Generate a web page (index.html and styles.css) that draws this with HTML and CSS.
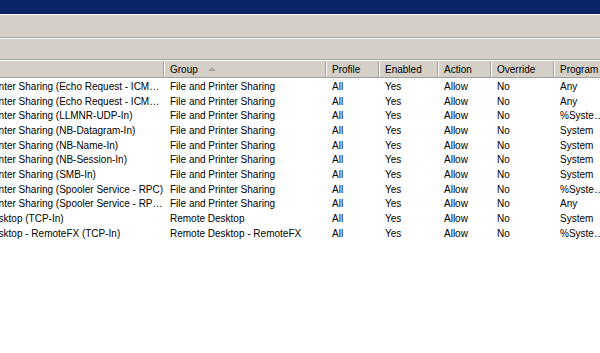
FILE: index.html
```html
<!DOCTYPE html>
<html>
<head>
  <meta charset="UTF-8">
  <title>Inbound Rules</title>
  <link rel="stylesheet" href="styles.css">
</head>
<body>
  <div class="titlebar"></div>
  <div class="bar bar-menu"></div>
  <div class="bar bar-tools"></div>

  <div class="list">
    <div class="row head">
      <div class="cell c-name"></div>
      <div class="cell c-group">Group <span class="sort"></span></div>
      <div class="cell c-profile">Profile</div>
      <div class="cell c-enabled">Enabled</div>
      <div class="cell c-action">Action</div>
      <div class="cell c-override">Override</div>
      <div class="cell c-program">Program</div>
    </div>

    <div class="row">
      <div class="cell c-name">File and Printer Sharing (Echo Request - ICMPv4-In)</div>
      <div class="cell c-group">File and Printer Sharing</div>
      <div class="cell c-profile">All</div>
      <div class="cell c-enabled">Yes</div>
      <div class="cell c-action">Allow</div>
      <div class="cell c-override">No</div>
      <div class="cell c-program">Any</div>
    </div>
    <div class="row">
      <div class="cell c-name">File and Printer Sharing (Echo Request - ICMPv6-In)</div>
      <div class="cell c-group">File and Printer Sharing</div>
      <div class="cell c-profile">All</div>
      <div class="cell c-enabled">Yes</div>
      <div class="cell c-action">Allow</div>
      <div class="cell c-override">No</div>
      <div class="cell c-program">Any</div>
    </div>
    <div class="row">
      <div class="cell c-name">File and Printer Sharing (LLMNR-UDP-In)</div>
      <div class="cell c-group">File and Printer Sharing</div>
      <div class="cell c-profile">All</div>
      <div class="cell c-enabled">Yes</div>
      <div class="cell c-action">Allow</div>
      <div class="cell c-override">No</div>
      <div class="cell c-program">%SystemRoot%\system32\svchost.exe</div>
    </div>
    <div class="row">
      <div class="cell c-name">File and Printer Sharing (NB-Datagram-In)</div>
      <div class="cell c-group">File and Printer Sharing</div>
      <div class="cell c-profile">All</div>
      <div class="cell c-enabled">Yes</div>
      <div class="cell c-action">Allow</div>
      <div class="cell c-override">No</div>
      <div class="cell c-program">System</div>
    </div>
    <div class="row">
      <div class="cell c-name">File and Printer Sharing (NB-Name-In)</div>
      <div class="cell c-group">File and Printer Sharing</div>
      <div class="cell c-profile">All</div>
      <div class="cell c-enabled">Yes</div>
      <div class="cell c-action">Allow</div>
      <div class="cell c-override">No</div>
      <div class="cell c-program">System</div>
    </div>
    <div class="row">
      <div class="cell c-name">File and Printer Sharing (NB-Session-In)</div>
      <div class="cell c-group">File and Printer Sharing</div>
      <div class="cell c-profile">All</div>
      <div class="cell c-enabled">Yes</div>
      <div class="cell c-action">Allow</div>
      <div class="cell c-override">No</div>
      <div class="cell c-program">System</div>
    </div>
    <div class="row">
      <div class="cell c-name">File and Printer Sharing (SMB-In)</div>
      <div class="cell c-group">File and Printer Sharing</div>
      <div class="cell c-profile">All</div>
      <div class="cell c-enabled">Yes</div>
      <div class="cell c-action">Allow</div>
      <div class="cell c-override">No</div>
      <div class="cell c-program">System</div>
    </div>
    <div class="row">
      <div class="cell c-name">File and Printer Sharing (Spooler Service - RPC)</div>
      <div class="cell c-group">File and Printer Sharing</div>
      <div class="cell c-profile">All</div>
      <div class="cell c-enabled">Yes</div>
      <div class="cell c-action">Allow</div>
      <div class="cell c-override">No</div>
      <div class="cell c-program">%SystemRoot%\system32\spoolsv.exe</div>
    </div>
    <div class="row">
      <div class="cell c-name">File and Printer Sharing (Spooler Service - RPC-EPMAP)</div>
      <div class="cell c-group">File and Printer Sharing</div>
      <div class="cell c-profile">All</div>
      <div class="cell c-enabled">Yes</div>
      <div class="cell c-action">Allow</div>
      <div class="cell c-override">No</div>
      <div class="cell c-program">Any</div>
    </div>
    <div class="row">
      <div class="cell c-name">Remote Desktop (TCP-In)</div>
      <div class="cell c-group">Remote Desktop</div>
      <div class="cell c-profile">All</div>
      <div class="cell c-enabled">Yes</div>
      <div class="cell c-action">Allow</div>
      <div class="cell c-override">No</div>
      <div class="cell c-program">System</div>
    </div>
    <div class="row">
      <div class="cell c-name">Remote Desktop - RemoteFX (TCP-In)</div>
      <div class="cell c-group">Remote Desktop - RemoteFX</div>
      <div class="cell c-profile">All</div>
      <div class="cell c-enabled">Yes</div>
      <div class="cell c-action">Allow</div>
      <div class="cell c-override">No</div>
      <div class="cell c-program">%SystemRoot%\system32\svchost.exe</div>
    </div>
  </div>
</body>
</html>
```

FILE: styles.css
```css
body { margin: 0; background: #fff; overflow: hidden; font-family: "Liberation Sans", Arial, sans-serif; font-size: 10px; color: #000; }

.titlebar { height: 14px; background: #0a246a; }
.bar { background: #d4d0c8; border-top: 1px solid #fff; border-bottom: 1px solid #a0a0a0; }
.bar-menu { height: 22px; }
.bar-tools { height: 20px; }

.list { margin-left: -58px; width: 700px; }
.row { display: flex; height: 14.67px; line-height: 14.67px; }
.cell { flex: none; box-sizing: border-box; padding: 2px 0 0 6px; white-space: nowrap; overflow: hidden; text-overflow: ellipsis; }

.head { height: 16px; line-height: 15px; background: #d4d0c8; border-top: 1px solid #fff; border-bottom: 1px solid #a0a0a0; }
.head .cell { border-left: 1px solid #fff; border-right: 1px solid #a0a0a0; padding: 1px 0 0 5px; }
.head .c-name { border-left: none; }

.c-name { width: 222px; }
.c-group { width: 162px; }
.c-profile { width: 53px; }
.c-enabled { width: 59px; }
.c-action { width: 53px; }
.c-override { width: 63px; }
.c-program { width: 56px; padding-right: 2px; }

.sort { display: inline-block; margin-left: 7px; vertical-align: 2px; width: 0; height: 0; border-left: 4px solid transparent; border-right: 4px solid transparent; border-bottom: 4px solid #a7a6a0; }
```
